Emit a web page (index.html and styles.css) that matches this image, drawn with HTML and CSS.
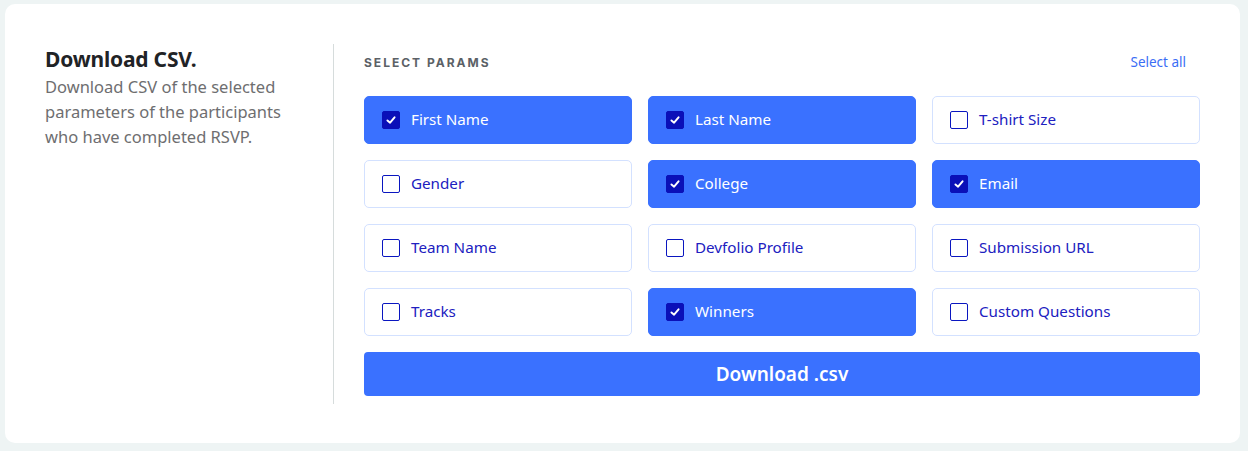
FILE: index.html
```html
<!DOCTYPE html>
<html>
<head>
<meta charset="utf-8">
<link rel="stylesheet" href="styles.css">
</head>
<body>
<div class="card">
  <div class="intro">
    <h2 class="title">Download CSV.</h2>
    <p class="desc">Download CSV of the selected parameters of the participants who have completed RSVP.</p>
  </div>
  <div class="params">
    <div class="params-head">
      <span class="label">SELECT PARAMS</span>
      <a class="select-all">Select all</a>
    </div>
    <div class="grid">
      <div class="opt on"><span class="box"><svg viewBox="0 0 18 18"><polyline points="5,9.5 8,12 13,6" /></svg></span><span>First Name</span></div>
      <div class="opt on"><span class="box"><svg viewBox="0 0 18 18"><polyline points="5,9.5 8,12 13,6" /></svg></span><span>Last Name</span></div>
      <div class="opt"><span class="box"></span><span>T-shirt Size</span></div>
      <div class="opt"><span class="box"></span><span>Gender</span></div>
      <div class="opt on"><span class="box"><svg viewBox="0 0 18 18"><polyline points="5,9.5 8,12 13,6" /></svg></span><span>College</span></div>
      <div class="opt on"><span class="box"><svg viewBox="0 0 18 18"><polyline points="5,9.5 8,12 13,6" /></svg></span><span>Email</span></div>
      <div class="opt"><span class="box"></span><span>Team Name</span></div>
      <div class="opt"><span class="box"></span><span>Devfolio Profile</span></div>
      <div class="opt"><span class="box"></span><span>Submission URL</span></div>
      <div class="opt"><span class="box"></span><span>Tracks</span></div>
      <div class="opt on"><span class="box"><svg viewBox="0 0 18 18"><polyline points="5,9.5 8,12 13,6" /></svg></span><span>Winners</span></div>
      <div class="opt"><span class="box"></span><span>Custom Questions</span></div>
    </div>
    <button class="download">Download .csv</button>
  </div>
</div>
</body>
</html>
```

FILE: styles.css
```css
* { box-sizing: border-box; }
html, body { margin: 0; padding: 0; }
body {
  background: #eef4f4;
  font-family: "Noto Sans", "Liberation Sans", sans-serif;
  width: 1248px;
  height: 451px;
  padding: 4px 8px 8px 5px;
}
.card {
  background: #ffffff;
  border-radius: 10px;
  width: 1235px;
  height: 439px;
  padding: 40px 40px 39px 40px;
  display: flex;
}
.intro {
  width: 289px;
  padding-right: 30px;
  border-right: 1px solid #d6dcdc;
}
.title {
  margin: 0;
  font-size: 21px;
  font-weight: 700;
  line-height: 30px;
  color: #1f2326;
  letter-spacing: -0.2px;
}
.desc {
  margin: 0;
  font-size: 16.5px;
  line-height: 25px;
  color: #6e6e70;
}
.params {
  flex: 1;
  padding-left: 30px;
  padding-bottom: 8px;
  display: flex;
  flex-direction: column;
}
.params-head {
  height: 36px;
  display: flex;
  align-items: center;
  justify-content: space-between;
  padding-right: 14px;
  margin-bottom: 16px;
}
.label {
  font-family: Inter, "Noto Sans", sans-serif;
  font-size: 12px;
  font-weight: 700;
  letter-spacing: 2px;
  color: #5b6166;
}
.select-all {
  font-size: 13.5px;
  color: #3a6df5;
  cursor: pointer;
}
.grid {
  display: grid;
  grid-template-columns: repeat(3, 1fr);
  grid-auto-rows: 48px;
  gap: 16px;
}
.opt {
  display: flex;
  align-items: center;
  gap: 11px;
  padding-left: 17px;
  padding-bottom: 2px;
  border: 1px solid #d3e1ff;
  border-radius: 5px;
  font-size: 15.2px;
  color: #2020c0;
  background: #ffffff;
}
.opt.on {
  background: #3a71ff;
  border-color: #3a71ff;
  color: #ffffff;
}
.box {
  width: 18px;
  height: 18px;
  border: 1.5px solid #0a16c0;
  border-radius: 2px;
  display: flex;
  align-items: center;
  justify-content: center;
  flex: none;
  margin-top: 2px;
}
.opt.on .box {
  background: #0a10b8;
  border-color: #0a10b8;
}
.box svg {
  width: 18px;
  height: 18px;
  fill: none;
  stroke: #ffffff;
  stroke-width: 2.2;
  stroke-linecap: round;
  stroke-linejoin: round;
}
.download {
  margin-top: 16px;
  height: 44px;
  border: none;
  border-radius: 4px;
  background: #3a71ff;
  color: #ffffff;
  font-family: "Noto Sans", sans-serif;
  font-size: 19px;
  font-weight: 600;
}
```
